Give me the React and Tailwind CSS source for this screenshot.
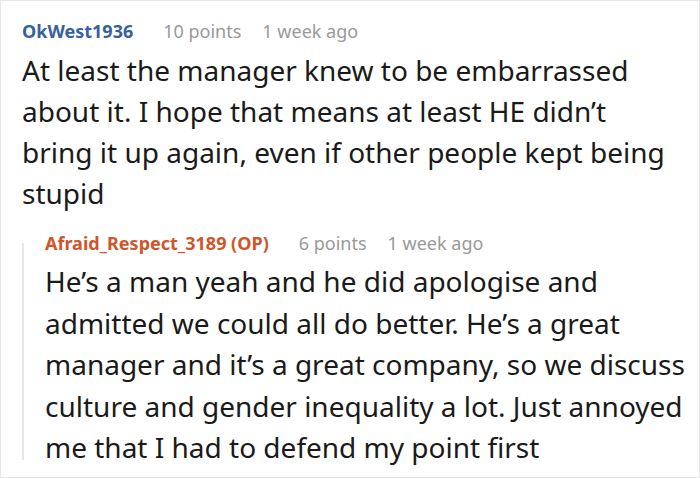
import React from 'react';

const Meta = ({ name, color, points, time }) => (
  <div className="flex items-baseline text-[18px] leading-none">
    <span className={`font-bold ${color}`}>{name}</span>
    <span className="ml-[30px] text-[#999]">{points}</span>
    <span className="ml-[21px] text-[#999]">{time}</span>
  </div>
);

const App = () => {
  return (
    <div className="w-[700px] h-[478px] bg-white border border-[#e8e8e8] overflow-hidden" style={{ fontFamily: '"Noto Sans", sans-serif' }}>
      <div className="pl-[21px] pt-[21px]">
        <Meta name="OkWest1936" color="text-[#36609f]" points="10 points" time="1 week ago" />
        <p className="mt-[10px] w-[650px] text-[28px] leading-[41px] text-[#1a1a1a]">
          At least the manager knew to be embarrassed about it. I hope that means at least HE didn’t bring it up again, even if other people kept being stupid
        </p>
      </div>
      <div className="relative ml-[21px] mt-[20px] pl-[23px]">
        <span className="absolute left-0 top-[9px] bottom-[9px] w-[2px] bg-[#e6e6e6]" />
        <Meta name="Afraid_Respect_3189 (OP)" color="text-[#d0552a]" points="6 points" time="1 week ago" />
        <p className="mt-[9px] w-[660px] text-[28px] leading-[41.5px] text-[#1a1a1a]">
          He’s a man yeah and he did apologise and admitted we could all do better. He’s a great manager and it’s a great company, so we discuss culture and gender inequality a lot. Just annoyed me that I had to defend my point first
        </p>
      </div>
    </div>
  );
};

export default App;
